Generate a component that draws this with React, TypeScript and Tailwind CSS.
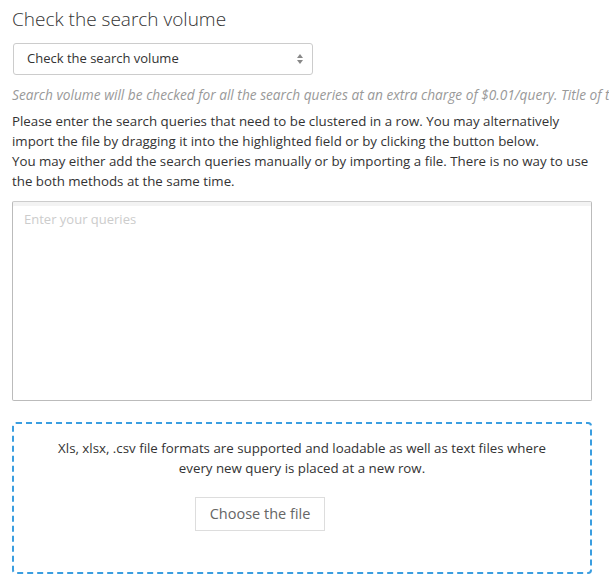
import React from "react";

export default function App() {
  return (
    <div className="w-[609px] h-[588px] overflow-hidden bg-white font-['Open_Sans',sans-serif] text-[#333]">
      <div className="pl-3 pr-4">
        <h2 className="pt-[6px] text-[19px] leading-[26px] font-light text-[#333]">
          Check the search volume
        </h2>

        <div className="mt-[11px] ml-px flex h-8 w-[300px] items-center justify-between rounded-[3px] border border-[#ccc] pl-[13px] pr-[8px] text-[13px] text-[#333]">
          <span>Check the search volume</span>
          <svg width="8" height="12" viewBox="0 0 8 12">
            <path d="M4 1 L7 5 L1 5 Z" fill="#888" />
            <path d="M4 11 L7 7 L1 7 Z" fill="#888" />
          </svg>
        </div>

        <p className="mt-[10px] whitespace-nowrap text-[13.7px] italic leading-[20px] text-[#999]">
          Search volume will be checked for all the search queries at an extra charge of $0.01/query. Title of the page will be checked as well.
        </p>

        <p className="mt-[6px] whitespace-nowrap text-[13.3px] leading-[20px] text-[#333]">
          Please enter the search queries that need to be clustered in a row. You may alternatively
          <br />
          import the file by dragging it into the highlighted field or by clicking the button below.
          <br />
          You may either add the search queries manually or by importing a file. There is no way to use
          <br />
          the both methods at the same time.
        </p>

        <div className="mt-[10px] h-[200px] w-[580px] rounded-[2px] border border-[#bbb] border-t-[#ccc] bg-white shadow-[inset_0_4px_0_#f3f3f3] px-[11px] pt-[4px]">
          <span className="text-[13px] text-[#ccc]">Enter your queries</span>
        </div>

        <div className="mt-[21px] flex h-[152px] w-[580px] flex-col items-center rounded-[4px] border-2 border-dashed border-[#3b9ee0] pt-[14px]">
          <p className="whitespace-nowrap text-center text-[13.3px] leading-[20px] text-[#333]">
            Xls, xlsx, .csv file formats are supported and loadable as well as text files where
            <br />
            every new query is placed at a new row.
          </p>
          <button className="mt-[19px] ml-[181px] h-[34px] w-[130px] self-start border border-[#ddd] bg-white text-[14.5px] text-[#666]">
            Choose the file
          </button>
        </div>
      </div>
    </div>
  );
}
